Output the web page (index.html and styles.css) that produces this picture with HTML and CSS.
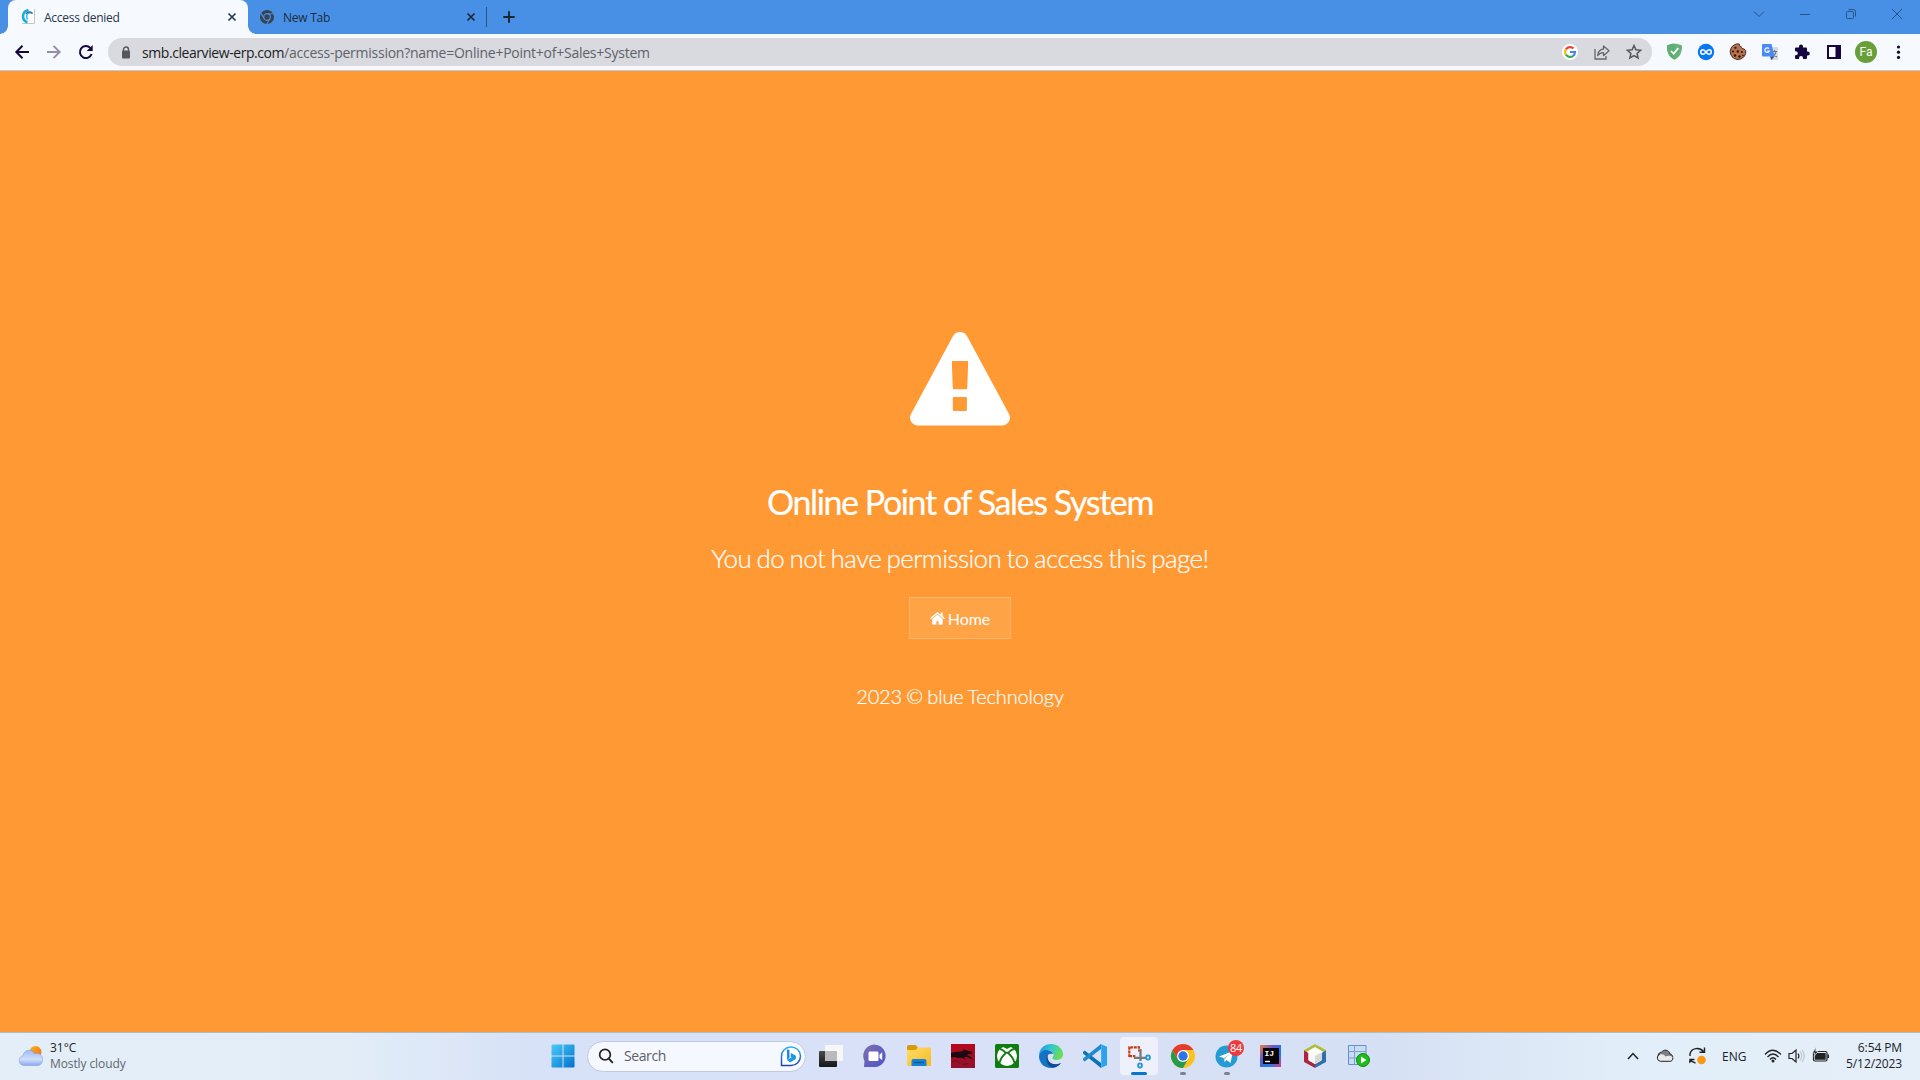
FILE: index.html
```html
<!DOCTYPE html>
<html lang="en">
<head>
<meta charset="utf-8">
<title>Access denied</title>
<link rel="stylesheet" href="styles.css">
</head>
<body>
<div class="screen">
  <header class="tabstrip">
    <div class="tab tab-active">
      <svg class="favicon" width="16" height="16" viewBox="0 0 16 16"><path d="M1 0h14v15H1z" fill="#fff"/><path d="M14.500 0v14.500H2" fill="none" stroke="#c4c4c4"/><path d="M8.500 1.200A6.200 6.200 0 0 0 7.500 13.300" fill="none" stroke="#19aee0" stroke-width="2.600"/><path d="M12.500 4.500C9 2.500 5 5 7.500 10.500" fill="none" stroke="#35b9e6" stroke-width="1.500"/><path d="M5.800 5C7.500 2.300 11 2.300 12.500 4.300" fill="none" stroke="#3c5a78" stroke-width="1.100"/></svg>
      <span class="tab-title">Access denied</span>
      <svg class="tab-close" width="16" height="16" viewBox="0 0 16 16"><path d="m4.500 4.500 7 7m0-7-7 7" stroke="#223a5c" stroke-width="1.700"/></svg>
    </div>
    <div class="tab tab-idle">
      <svg class="favicon" width="16" height="16" viewBox="0 0 16 16"><circle cx="8" cy="8" r="7" fill="#3a434d"/><circle cx="8" cy="8" r="3.300" fill="#3a434d" stroke="#4790e6" stroke-width="1.200"/><path d="M8 4.700h6.300M5.200 9.700 2 4.200M10.800 9.700l-3 5.300" stroke="#4790e6" stroke-width="1.100"/></svg>
      <span class="tab-title">New Tab</span>
      <svg class="tab-close" width="16" height="16" viewBox="0 0 16 16"><path d="m4.500 4.500 7 7m0-7-7 7" stroke="#1d2733" stroke-width="1.700"/></svg>
    </div>
    <svg class="new-tab" width="16" height="16" viewBox="0 0 16 16"><path d="M8 2.300v11.400M2.300 8h11.400" stroke="#1b2530" stroke-width="1.900"/></svg>
    <div class="window-controls">
      <svg viewBox="0 0 16 16"><path d="m3 5.500 5 5 5-5" /></svg>
      <svg viewBox="0 0 16 16"><path d="M3 8.500h10"/></svg>
      <svg viewBox="0 0 16 16"><rect x="3.500" y="5.500" width="7" height="7" rx="1"/><path d="M5.500 3.500h5a2 2 0 0 1 2 2v5"/></svg>
      <svg viewBox="0 0 16 16"><path d="m3 3 10 10M13 3 3 13"/></svg>
    </div>
  </header>

  <nav class="toolbar">
    <div class="nav-buttons">
      <svg viewBox="0 0 16 16"><path d="M15 8H2.500M8.500 1.800 2.300 8l6.200 6.200" fill="none" stroke="#16063f" stroke-width="2"/></svg>
      <svg viewBox="0 0 16 16"><path d="M1 8h12.500M7.500 1.800 13.700 8l-6.200 6.200" fill="none" stroke="#948cab" stroke-width="1.900"/></svg>
      <svg viewBox="0 0 16 16"><path d="M13.600 10A6 6 0 1 1 12.300 3.900" fill="none" stroke="#16063f" stroke-width="2"/><path d="M14.700 1v6h-6z" fill="#16063f"/></svg>
    </div>
    <div class="address">
      <svg class="lock" width="10" height="13" viewBox="0 0 10 13"><path d="M2.500 5V3.500a2.500 2.500 0 0 1 5 0V5" fill="none" stroke="#55575c" stroke-width="1.400"/><rect x="1" y="4.500" width="8" height="8" rx="1" fill="#55575c"/></svg>
      <span class="url"><b>smb.clearview-erp.com</b>/access-permission?name=Online+Point+of+Sales+System</span>
      <div class="address-actions">
        <svg viewBox="0 0 18 18"><circle cx="9" cy="9" r="8" fill="#fff"/><g fill="none" stroke-width="2.200"><path d="M4.900 6.300A5 5 0 0 1 12.500 5.400" stroke="#ea4335"/><path d="M4.900 11.700a5 5 0 0 1 0-5.400" stroke="#fbbc05"/><path d="M12.200 12.800a5 5 0 0 1-7.300-1.100" stroke="#34a853"/><path d="M9 9h5a5 5 0 0 1-1.800 3.800" stroke="#4285f4"/></g></svg>
        <svg viewBox="0 0 18 18"><path d="M2 6v10h11v-3" fill="none" stroke="#66686d" stroke-width="1.300"/><path d="M10.500 3v3C6.500 6.500 5 9 4.600 12.500c1.500-2 3.300-2.800 5.900-2.800v3L16 7.800z" fill="none" stroke="#66686d" stroke-width="1.300" stroke-linejoin="round"/></svg>
        <svg viewBox="0 0 18 18"><path d="m9 2.500 1.900 4.300 4.700.5-3.500 3.100 1 4.600L9 12.600 4.900 15l1-4.600-3.500-3.100 4.700-.5z" fill="none" stroke="#55575c" stroke-width="1.500"/></svg>
      </div>
    </div>
    <div class="extensions">
      <svg viewBox="0 0 18 18"><path d="M9.500.8c2.500 0 5 .5 7.500 1.600 0 5-.5 10.500-7.500 14.400C2.500 12.900 2 7.400 2 2.400 4.500 1.300 7 .8 9.500.8z" fill="#67b279"/><path d="M9.500.8v16C2.500 12.900 2 7.400 2 2.400 4.500 1.300 7 .8 9.500.8z" fill="#5fae72"/><path d="m6 8 2.700 2.800L13.300 5" fill="none" stroke="#fff" stroke-width="1.700"/></svg>
      <svg viewBox="0 0 18 18"><circle cx="9" cy="9" r="8.200" fill="#0877f2"/><path d="M9 9C7.500 7 6.800 6.700 6 6.700a2.300 2.300 0 0 0 0 4.600c.8 0 1.500-.3 3-2.300s2.200-2.300 3-2.300a2.300 2.300 0 0 1 0 4.600c-.8 0-1.500-.3-3-2.300z" fill="none" stroke="#fff" stroke-width="1.500"/></svg>
      <svg viewBox="0 0 18 18"><path d="M6 1.500c2-.9 3.200-.7 4.500-.3 0 1.500.5 2.300 1.800 2.500.2 1.500 1.200 2.200 2.700 2.200l1.700 1.600A7.800 7.800 0 1 1 6 1.500z" fill="#b9714d" stroke="#34231e" stroke-width=".9"/><g fill="#271713"><circle cx="6.500" cy="4.800" r="1.100"/><circle cx="4" cy="8.500" r="1.100"/><circle cx="8.800" cy="8.500" r="1.200"/><circle cx="12.800" cy="9" r="1"/><circle cx="6" cy="12.500" r="1.200"/><circle cx="10.500" cy="13.500" r="1.200"/><circle cx="14" cy="12.500" r=".8"/></g></svg>
      <svg viewBox="0 0 18 18"><path d="M7 4h10v13H9z" fill="#d8dadd"/><path d="M11 8.500h5M13.500 7v1.500M15 8.500c-.5 3-2 4.500-4 5.500M12 10c.7 2 2 3.300 4 4" fill="none" stroke="#6c7880" stroke-width="1.100"/><path d="M2 1h8.500l3 12.500H2a1 1 0 0 1-1-1V2a1 1 0 0 1 1-1z" fill="#4a8af4"/><path d="M9 13.500h4.500L10.500 17z" fill="#2455b7"/><path d="M8 5.700A2.300 2.300 0 1 0 8.300 8H6.200" fill="none" stroke="#fff" stroke-width="1.200"/></svg>
      <svg viewBox="0 0 18 18"><path d="M2 5.500a1 1 0 0 1 1-1h3v-1a2 2 0 0 1 4 0v1h3a1 1 0 0 1 1 1v3h.8a2 2 0 0 1 0 4H14V15a1 1 0 0 1-1 1H10v-1a2 2 0 0 0-4 0v1H3a1 1 0 0 1-1-1v-2.800h.8a2 2 0 0 0 0-4H2z" fill="#16063f"/></svg>
      <svg viewBox="0 0 18 18"><path d="M2 2h14v14H2zm2 2v10h6.500V4z" fill="#16063f" fill-rule="evenodd"/></svg>
      <span class="avatar">Fa</span>
      <svg viewBox="0 0 18 18"><g fill="#16063f"><circle cx="9.500" cy="4" r="1.600"/><circle cx="9.500" cy="9.200" r="1.600"/><circle cx="9.500" cy="14.400" r="1.600"/></g></svg>
    </div>
  </nav>

  <main class="page">
    <svg class="warning" width="102" height="94" viewBox="0 0 102 94"><path fill="#fff" fill-rule="evenodd" d="M44 4a8 8 0 0 1 14 0l42 78a7.800 7.800 0 0 1-7 11.500H9A7.800 7.800 0 0 1 2 82zM44 29q-1.200 0-1.200 1.200l1 26q0 1 1.200 1h12q1.200 0 1.200-1l1-26q0-1.200-1.200-1.200zM45 65q-1.200 0-1.200 1.200v11.600q0 1.200 1.200 1.200h11.700q1.200 0 1.200-1.200V66.200q0-1.200-1.200-1.200z"/></svg>
    <h1>Online Point of Sales System</h1>
    <p class="message">You do not have permission to access this page!</p>
    <a class="home"><svg width="15" height="13" viewBox="0 0 15 13"><path fill="#fff" d="M7.500 0 0 6.300l.9 1L7.500 1.800l6.600 5.500.9-1-2.300-2V.5h-2v2.200zM2.300 6.900V12q0 .7.700.7h3.400V9.300h2.200v3.400H12q.7 0 .7-.7V6.900L7.500 2.500z"/></svg><span>Home</span></a>
    <p class="copyright">2023 © blue Technology</p>
  </main>

  <footer class="taskbar">
    <div class="weather">
      <svg width="26" height="22" viewBox="0 0 26 22"><defs><linearGradient id="cloud" x2="0" y2="1"><stop stop-color="#9dbcf1"/><stop offset=".6" stop-color="#cfdffa"/><stop offset="1" stop-color="#89abea"/></linearGradient><linearGradient id="sun" x2="1" y2="1"><stop stop-color="#fbb51c"/><stop offset="1" stop-color="#f26a1b"/></linearGradient></defs><circle cx="17.500" cy="7" r="6" fill="url(#sun)"/><path d="M5.500 20.500a5 5 0 0 1-.5-9.800C6 4 14.500 3.500 16.500 9c4.500-1.500 8 1 8 5.500 0 4-2.500 6-5 6z" fill="url(#cloud)" stroke="#7fa3e6" stroke-width=".6"/></svg>
      <div class="weather-text"><span>31°C</span><span class="muted">Mostly cloudy</span></div>
    </div>

    <div class="apps">
      <div class="app"><svg viewBox="0 0 24 24"><defs><linearGradient id="win" x1="0" y1="0" x2="24" y2="24" gradientUnits="userSpaceOnUse"><stop stop-color="#4bcdf8"/><stop offset="1" stop-color="#0070cc"/></linearGradient></defs><path d="M.5 1.500q0-1 1-1h10v11H.5zM12.500.5h10q1 0 1 1v10h-11zM.5 12.500h11v11h-10q-1 0-1-1zM12.500 12.500h11v10q0 1-1 1h-10z" fill="url(#win)"/></svg></div>
      <div class="search">
        <svg width="16" height="16" viewBox="0 0 16 16"><circle cx="7" cy="6.700" r="5.300" fill="none" stroke="#222" stroke-width="1.700"/><path d="m10.800 10.600 4 4.200" stroke="#222" stroke-width="1.900"/></svg>
        <span>Search</span>
        <svg class="bing" width="22" height="22" viewBox="0 0 22 22"><defs><linearGradient id="bing" x2="0" y2="1"><stop stop-color="#28b6ee"/><stop offset="1" stop-color="#2440b5"/></linearGradient></defs><path d="M1.500 20.500v-9a9.500 9.300 0 1 1 9.500 9z" fill="#fff" stroke="url(#bing)" stroke-width="1.500"/><path d="M7 4.300 9.500 5v8L7 15z" fill="#2687e9"/><path d="m11 8 4.500 2.500c1 1.500.8 3-.5 4L10 17.500 7 15l4.500-2.500-1-1z" fill="#1a9be8"/></svg>
      </div>
      <div class="app"><svg viewBox="0 0 24 24"><defs><linearGradient id="dark" x2="0" y2="1"><stop stop-color="#4a4a4a"/><stop offset="1" stop-color="#161616"/></linearGradient></defs><rect y="7" width="18" height="16" rx="1" fill="url(#dark)"/><rect x="6" y="1" width="18" height="16" rx="1" fill="#f7f7f8" /><path d="M6 7h12v10H7q-1 0-1-1z" fill="#b9babb"/></svg></div>
      <div class="app"><svg viewBox="0 0 24 24"><defs><linearGradient id="chat" x2="1" y2="1"><stop stop-color="#7f6fae"/><stop offset="1" stop-color="#4d54cb"/></linearGradient></defs><path d="M1 23 1.500 17A11.200 11.200 0 1 1 12 23z" fill="url(#chat)"/><rect x="5.500" y="7.500" width="10" height="9.500" rx="1.300" fill="#fff"/><path d="m16.500 10.700 2.700-2.500v8l-2.700-2.500z" fill="#fff"/></svg></div>
      <div class="app"><svg viewBox="0 0 24 24"><defs><linearGradient id="folder" x2="1" y2="1"><stop stop-color="#ffdc68"/><stop offset="1" stop-color="#f6ba24"/></linearGradient></defs><path d="M0 3q0-2 1.500-2h7l2.500 2.500V8H0z" fill="#d99a09"/><path d="M0 6h8.500L11 3.500h12q1 0 1 1V21q0 1-1 1H1q-1 0-1-1z" fill="url(#folder)"/><path d="M4.500 22v-5q0-2 2-2h11q2 0 2 2v5z" fill="#1681d5"/><path d="M7 18.500h10" stroke="#075493" stroke-width="1.300"/></svg></div>
      <div class="app"><svg viewBox="0 0 24 24"><defs><linearGradient id="crimson" x2="0" y2="1"><stop stop-color="#b8061c"/><stop offset="1" stop-color="#90122e"/></linearGradient></defs><path d="M0 0h24v24H0z" fill="url(#crimson)"/><path d="M0 9 4 8l6-.5 2.500-1L12 5l4 1.500L22 8l-2 .8 1.500 1.700-4-.5-1.500 1 4 2 1.500 2.500-5-2.500-4 .2 3 2.800-5-2.300-4 .3-2-1L0 13.500z" fill="#1d0a10"/><path d="m1 18 4-1.500 4 2.500M12 20.500l5-1" stroke="#6d0b1d" fill="none"/></svg></div>
      <div class="app"><svg viewBox="0 0 24 24"><rect width="24" height="24" rx="1.500" fill="#107c10"/><circle cx="12" cy="12" r="10" fill="#fff"/><path d="M6 3.200Q8.500 2.700 12 5q3.500-2.300 6-1.800L16 1.500H8z" fill="#107c10"/><path d="M12 8.200C8 11 5 15.500 4.200 20M12 8.200c4 2.800 7 7.300 7.800 11.800M4.500 5Q7 5 10.500 8.600M19.500 5Q17 5 13.500 8.600" fill="none" stroke="#107c10" stroke-width="1.900"/></svg></div>
      <div class="app"><svg viewBox="0 0 24 24"><defs><linearGradient id="edge" x2="1" y2=".3"><stop stop-color="#1b91dc"/><stop offset=".5" stop-color="#32c4d4"/><stop offset="1" stop-color="#69dd55"/></linearGradient></defs><path d="M0 12C0 4 6 0 12 0c7 0 12 5 12 10 0 4-3 6-6.500 6-3 0-4-1-4-2s1.200-1.600 1.200-3.200C14.700 8 11 6 8 6c-4 0-7 2-8 6z" fill="url(#edge)"/><path d="M0 12C1 7 5 5.500 8 6c3.500.4 6 2.500 6.500 4C9 8.500 7 12 8.500 16c1.500 4 7 6 13.500 3-3 4-6.500 5-10 5C5 24 0 19 0 12z" fill="#1274c5"/><path d="M8.700 10.500C6 14 7.500 22 14 23.500c3.500-.4 6-1.800 8-4.500-6 3-11 .5-12.500-2.500-1-2-1-4.500-.8-6z" fill="#114a91"/></svg></div>
      <div class="app"><svg viewBox="0 0 24 24"><path d="m0 8 1.700-1.600L18 19v5L0 9.500z" fill="#0f70b5"/><path d="m0 16 1.700 1.600L18 5V0L0 14.500z" fill="#2089cf"/><path d="m17.500 0 6.500 2.800v18.400L17.500 24q.7-.7.700-2V2q0-1.300-.7-2z" fill="#2ba4ec"/></svg></div>
      <div class="app app-active"><svg viewBox="0 0 24 24"><path d="M2.300 13V3.300h10.500M2.300 12.200h6" fill="none" stroke="#c93a12" stroke-width="2.200" stroke-dasharray="2.800 .8"/><path d="M12 2.500v5" stroke="#c93a12" stroke-width="2" stroke-dasharray="2 1"/><path d="M13.500 5v12M7 13.800h12" stroke="#777b7e" stroke-width="2.300"/><g fill="#fff" stroke="#229ad6" stroke-width="1.800"><circle cx="21" cy="13.500" r="2"/><circle cx="13" cy="21.500" r="2"/></g></svg><i class="indicator"></i></div>
      <div class="app"><svg viewBox="0 0 24 24"><circle cx="12" cy="12" r="12" fill="#fcc31e"/><path d="M1.600 6A12 12 0 0 1 22.400 6H12L6.800 15z" fill="#e33b2e"/><path d="M1.600 6 6.800 15 12 18l5.200-3L12 24A12 12 0 0 1 1.600 6z" fill="#279b4b"/><circle cx="12" cy="12" r="6" fill="#fff"/><circle cx="12" cy="12" r="4.700" fill="#2d74e8"/></svg><i class="indicator"></i></div>
      <div class="app"><svg viewBox="0 0 24 24"><circle cx="11.500" cy="12.500" r="11" fill="#259bd3"/><path d="M4 12.500 18 7l-2.500 12-4-3-2 2-.8-4z" fill="#fff"/><path d="m8.700 14 6-4.500-4.500 5.500-.7 3z" fill="#aacfe4"/></svg><span class="badge">84</span><i class="indicator"></i></div>
      <div class="app"><svg viewBox="0 0 24 24"><defs><linearGradient id="idea" x2="1" y2="1"><stop stop-color="#f27a35"/><stop offset=".35" stop-color="#6757c9"/><stop offset=".65" stop-color="#147df5"/><stop offset="1" stop-color="#e8387e"/></linearGradient></defs><path d="M1 1h21v22H1z" fill="url(#idea)"/><path d="M4 4h16v16H4z" fill="#080408"/><path d="M6 17.500h5" stroke="#fff" stroke-width="1.400"/><text x="5.500" y="12" class="idea-text">IJ</text></svg></div>
      <div class="app"><svg viewBox="0 0 24 24"><path d="m12 0 11 6v12l-11 6-11-6V6z" fill="#fff"/><path d="M12 0 1 6v3.500l5-3L12 3l6 3.500 5 3V6z" fill="#aebd3b"/><path d="M1 6.500V18l11 6v-4l-6.500-3.500V9z" fill="#ad2444"/><path d="M23 6.500V18l-11 6v-4l6.500-3.500V9z" fill="#326fae"/><path d="m12 4.500 6.500 4V16L12 20l-6.500-4V8.500z" fill="#fafafa"/><path d="m12 12 6.500-3.500V16L12 20z" fill="#d9d9d2"/></svg></div>
      <div class="app"><svg viewBox="0 0 24 24"><path d="M1.500 1.500H19v19H1.500z" fill="#c9dcf5" stroke="#688fc5"/><path d="M1.500 7.500H19M1.500 14H19M7.500 1.500v19" stroke="#7d9fce" stroke-width="1"/><circle cx="16" cy="16" r="6.500" fill="#19be17" stroke="#118a12"/><path d="m14 12.500 5.500 3.500-5.500 3.500z" fill="#fff"/></svg></div>
    </div>

    <div class="tray">
      <svg viewBox="0 0 18 18"><path d="m4 12 5-5.500 5 5.500" fill="none" stroke="#222" stroke-width="1.500"/></svg>
      <svg viewBox="0 0 18 18"><path d="M2 8.500C2.500 6 4 5.300 5.500 5.300 7.500 2 13 2.500 14 7c2 .5 2.800 1.800 2.800 3.500H5z" fill="#7d7f82" stroke="#222"/><path d="M4.500 14.300a3.500 3.500 0 0 1-.8-6.800c2.300-.7 4.500 0 5.800 2 3-1.300 6.500-.8 7.300 1.500.2 2-1 3.300-3 3.300z" fill="#e8eaec"/><path d="M3.700 7.500a3.500 3.500 0 0 0 .8 6.800h9.300c2 0 3.200-1.300 3-3.300" fill="none" stroke="#222"/></svg>
      <svg viewBox="0 0 18 18"><path d="M2 9V7C3.500.5 11.500 0 15.500 4.500M16.500.5v4.800h-5M2 16c-.4-.5 0-3.500 0-3.500h4.500M2 12.500c1.500 2 3 3 5.500 3.500" fill="none" stroke="#222" stroke-width="1.400"/><circle cx="13.500" cy="13" r="4.300" fill="#fb9712"/></svg>
      <span class="language">ENG</span>
      <div class="status">
        <svg viewBox="0 0 18 18"><g fill="none" stroke="#222" stroke-width="1.300"><path d="M1 7.500q8-8.500 16 0M3.500 10q5.500-6 11 0M6 12.500q3-3.500 6 0"/></g><circle cx="9" cy="14" r="1.500" fill="#222"/></svg>
        <svg viewBox="0 0 18 18"><path d="M1 6.500h3l4-3.500v12l-4-3.500H1z" fill="none" stroke="#222" stroke-width="1.200"/><path d="M10 6.500q1.800 2.500 0 5" fill="none" stroke="#222" stroke-width="1.200"/><path d="M12 4.500q3.500 4.500 0 9M14 3q4.500 6 0 12" fill="none" stroke="#bbc4cb" stroke-width="1.100"/></svg>
        <svg viewBox="0 0 18 18"><rect x="1.500" y="4.500" width="13.500" height="9.500" rx="1.500" fill="none" stroke="#222" stroke-width="1.200"/><path d="M2.800 12.700V8.500L5 6h8.700v6.700zM15.500 7.500H17v3.500h-1.500z" fill="#222"/><path d="M4 .5.500 6H3L2 9.500 6 4.500H3.500z" fill="#222" stroke="#e5eef9" stroke-width=".5"/></svg>
      </div>
      <div class="clock"><span>6:54 PM</span><span>5/12/2023</span></div>
    </div>
  </footer>
</div>
</body>
</html>
```
FILE: styles.css
```css
* { box-sizing: border-box; }
body { margin: 0; font-family: "Open Sans", "Noto Sans", sans-serif; }
svg { display: block; flex: none; }
.screen { width: 1920px; height: 1080px; display: flex; flex-direction: column; overflow: hidden; }

.tabstrip { height: 34px; background: #4790e6; display: flex; align-items: center; padding-left: 8px; }
.tab { display: flex; align-items: center; height: 34px; font-size: 12px; letter-spacing: -.25px; }
.tab-active { width: 240px; padding-left: 12px; position: relative; background: #f6f9fe; border-radius: 8px 8px 0 0; }
.tab-active::before, .tab-active::after { content: ""; position: absolute; bottom: 0; width: 8px; height: 8px; }
.tab-active::before { left: -8px; background: radial-gradient(circle at 0 0, transparent 7.500px, #f6f9fe 8px); }
.tab-active::after { right: -8px; background: radial-gradient(circle at 100% 0, transparent 7.500px, #f6f9fe 8px); }
.favicon { margin-right: 8px; }
.tab-title { width: 180px; white-space: nowrap; color: #26364b; }
.tab-idle { width: 239px; height: 20px; padding-left: 11px; border-right: 1px solid #2c5583; }
.tab-idle .tab-title { color: #1d2b3b; }
.new-tab { margin-left: 14px; }
.window-controls { display: flex; margin-left: auto; height: 34px; padding-bottom: 6px; align-items: center; }
.window-controls svg { width: 46px; height: 16px; fill: none; stroke: #285583; stroke-width: 1; }

.toolbar { height: 37px; background: #f6f9fe; border-bottom: 1px solid #c2c5dc; display: flex; align-items: center; }
.nav-buttons { display: flex; padding-left: 14px; gap: 16px; width: 108px; }
.nav-buttons svg { width: 16px; height: 16px; }
.address { width: 1544px; height: 28px; border-radius: 14px; background: #d9dae0; display: flex; align-items: center; padding-left: 13px; }
.url { margin-left: 11px; font-size: 14px; letter-spacing: -.25px; color: #606268; white-space: nowrap; }
.url b { font-weight: 400; letter-spacing: -.43px; color: #1c1d21; }
.address-actions { display: flex; margin-left: auto; gap: 14px; padding-right: 9px; }
.address-actions svg, .extensions svg { width: 18px; height: 18px; }
.extensions { display: flex; align-items: center; gap: 14px; padding-left: 13px; }
.avatar { width: 22px; height: 22px; margin: 0 -2px; border-radius: 50%; background: #689f38; color: #fff; font: 12px/22px Roboto, sans-serif; text-align: center; }

.page { height: 961px; background: #f93; color: #fff; font-family: Lato, sans-serif; display: flex; flex-direction: column; align-items: center; padding-top: 261px; }
.page h1 { margin: 52px 0 0; font-size: 34px; line-height: 48px; font-weight: 400; letter-spacing: -1.400px; white-space: nowrap; -webkit-text-stroke: .2px #fff; }
.message { margin: 16px 0 0; font-size: 26px; line-height: 32px; font-weight: 300; letter-spacing: -.57px; word-spacing: -1.200px; white-space: nowrap; -webkit-text-stroke: .2px #fff; }
.home { margin-top: 23px; width: 102px; height: 42px; border: 1px solid #ffb76f; background: #ffa347; display: flex; justify-content: center; align-items: center; gap: 3px; font-size: 16px; }
.copyright { margin: 44px 0 0; font-size: 20px; line-height: 26px; font-weight: 300; letter-spacing: -.14px; word-spacing: -1px; white-space: nowrap; -webkit-text-stroke: .2px #fff; }

.taskbar { height: 48px; border-top: 1px solid #b3bac4; background: linear-gradient(90deg, #e3eef8 0, #e2edf8 18%, #d7e1f7 28%, #d8e1f7 52%, #d6e0f4 72%, #e1edf8 84%, #e4eff9 100%); display: flex; align-items: center; padding-bottom: 1px; }
.weather { width: 541px; padding-left: 18px; display: flex; align-items: center; gap: 6px; }
.weather-text { display: flex; flex-direction: column; font-size: 12px; line-height: 16px; color: #202327; }
.weather-text .muted { color: #61676d; letter-spacing: -.1px; }
.apps { display: flex; align-items: center; height: 46px; }
.app { position: relative; width: 44px; height: 46px; display: flex; align-items: center; justify-content: center; }
.app svg { width: 24px; height: 24px; overflow: visible; }
.app-active { width: 38px; height: 38px; margin: 0 3px; border-radius: 4px; background: #eef1fb; }
.indicator { position: absolute; bottom: 4px; left: 19px; width: 6px; height: 3px; border-radius: 2px; background: #7c8290; }
.app-active .indicator { left: 11px; bottom: 0; width: 16px; background: #0875d1; }
.badge { position: absolute; left: 23px; top: 7px; width: 16px; height: 16px; border-radius: 8px; background: #f0393c; color: #fff; font-size: 11px; line-height: 16px; letter-spacing: -.3px; text-align: center; }
.idea-text { font: bold 8px "Liberation Mono", monospace; fill: #fff; }
.search { width: 219px; height: 31px; margin: 0 3px 0 2px; border: 1px solid #bfc9df; border-radius: 16px; background: #f5f8fe; display: flex; align-items: center; padding: 0 3px 0 10px; font-size: 14px; color: #5c5f66; gap: 10px; }
.search span { margin-top: -1px; letter-spacing: -.4px; }
.bing { margin-left: auto; }
.tray { display: flex; align-items: center; margin-left: auto; padding-right: 18px; }
.tray svg { width: 18px; height: 18px; }
.tray > svg { margin-right: 14px; }
.language { width: 24px; margin-left: 2px; font-size: 12px; color: #202327; }
.status { display: flex; gap: 6px; margin-left: 18px; }
.clock { width: 72px; display: flex; flex-direction: column; align-items: flex-end; font-size: 12px; line-height: 16px; letter-spacing: -.1px; color: #202327; white-space: nowrap; }
```
